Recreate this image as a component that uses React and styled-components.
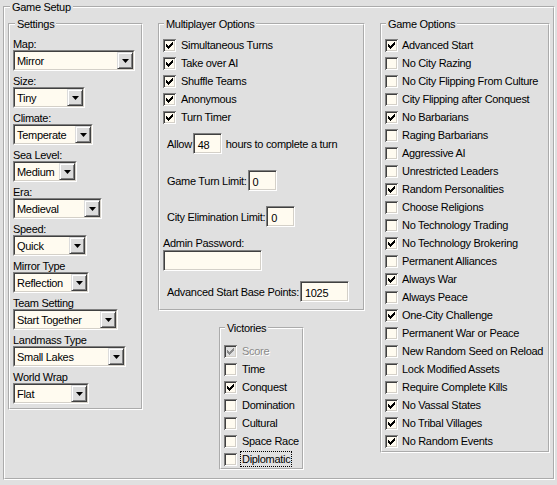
import styled, { createGlobalStyle } from 'styled-components';

const GlobalStyle = createGlobalStyle`
  html, body {
    margin: 0;
    padding: 0;
    background: #e0e0e0;
  }
  body {
    font-family: 'Liberation Sans', Arial, sans-serif;
    font-size: 11px;
    letter-spacing: -0.3px;
    color: #000;
  }
`;

const settings = [
  { label: 'Map:', value: 'Mirror', width: 122 },
  { label: 'Size:', value: 'Tiny', width: 72 },
  { label: 'Climate:', value: 'Temperate', width: 80 },
  { label: 'Sea Level:', value: 'Medium', width: 64 },
  { label: 'Era:', value: 'Medieval', width: 89 },
  { label: 'Speed:', value: 'Quick', width: 74 },
  { label: 'Mirror Type', value: 'Reflection', width: 76 },
  { label: 'Team Setting', value: 'Start Together', width: 105 },
  { label: 'Landmass Type', value: 'Small Lakes', width: 113 },
  { label: 'World Wrap', value: 'Flat', width: 76 },
];

const multiplayer = [
  { label: 'Simultaneous Turns', checked: true },
  { label: 'Take over AI', checked: true },
  { label: 'Shuffle Teams', checked: true },
  { label: 'Anonymous', checked: true },
  { label: 'Turn Timer', checked: true },
];

const victories = [
  { label: 'Score', checked: true, disabled: true },
  { label: 'Time' },
  { label: 'Conquest', checked: true },
  { label: 'Domination' },
  { label: 'Cultural' },
  { label: 'Space Race' },
  { label: 'Diplomatic', focused: true },
];

const gameOptions = [
  { label: 'Advanced Start', checked: true },
  { label: 'No City Razing' },
  { label: 'No City Flipping From Culture' },
  { label: 'City Flipping after Conquest' },
  { label: 'No Barbarians', checked: true },
  { label: 'Raging Barbarians' },
  { label: 'Aggressive AI' },
  { label: 'Unrestricted Leaders' },
  { label: 'Random Personalities', checked: true },
  { label: 'Choose Religions' },
  { label: 'No Technology Trading' },
  { label: 'No Technology Brokering', checked: true },
  { label: 'Permanent Alliances' },
  { label: 'Always War', checked: true },
  { label: 'Always Peace' },
  { label: 'One-City Challenge', checked: true },
  { label: 'Permanent War or Peace' },
  { label: 'New Random Seed on Reload' },
  { label: 'Lock Modified Assets' },
  { label: 'Require Complete Kills' },
  { label: 'No Vassal States', checked: true },
  { label: 'No Tribal Villages', checked: true },
  { label: 'No Random Events', checked: true },
];

function CheckBox({ checked, disabled }) {
  return (
    <Box $disabled={disabled}>
      {checked && (
        <svg width="13" height="13" viewBox="0 0 13 13">
          <path
            d="M3 5h1v3H3zM4 6h1v3H4zM5 7h1v3H5zM6 6h1v3H6zM7 5h1v3H7zM8 4h1v3H8zM9 3h1v3H9z"
            fill={disabled ? '#8a8a8a' : '#000'}
          />
        </svg>
      )}
    </Box>
  );
}

function CheckList({ items, gap }) {
  return items.map((item) => (
    <CheckRow key={item.label} $gap={gap}>
      <CheckBox checked={item.checked} disabled={item.disabled} />
      <CheckText $disabled={item.disabled} $focused={item.focused}>
        {item.label}
      </CheckText>
    </CheckRow>
  ));
}

function Select({ value, width }) {
  return (
    <SelectFrame $width={width}>
      <SelectInner>
        <SelectValue>{value}</SelectValue>
        <DropButton>
          <svg width="7" height="4" viewBox="0 0 7 4">
            <path d="M0 0h7L3.5 4z" fill="#000" />
          </svg>
        </DropButton>
      </SelectInner>
    </SelectFrame>
  );
}

export default function App() {
  return (
    <>
      <GlobalStyle />
      <Page>
        <Group $width={552}>
          <Caption $indent={5}>Game Setup</Caption>
          <Columns>
            <Group $width={135}>
              <Caption $indent={5}>Settings</Caption>
              <SettingsBody>
                {settings.map((s) => (
                  <div key={s.label}>
                    <FieldLabel>{s.label}</FieldLabel>
                    <Select value={s.value} width={s.width} />
                  </div>
                ))}
              </SettingsBody>
            </Group>

            <MiddleColumn>
              <Group $width={207}>
                <Caption>Multiplayer Options</Caption>
                <ListBody $bottom={7}>
                  <CheckList items={multiplayer} gap={5} />
                  <InlineField $top={7}>
                    Allow
                    <TextField $width={29}>48</TextField>
                    <Spacer />
                    hours to complete a turn
                  </InlineField>
                  <InlineField $top={16}>
                    Game Turn Limit:
                    <TextField $width={29}>0</TextField>
                  </InlineField>
                  <InlineField $top={15}>
                    City Elimination Limit:
                    <TextField $width={29}>0</TextField>
                  </InlineField>
                  <FieldLabel $top={9}>Admin Password:</FieldLabel>
                  <TextField $width={99} />
                  <InlineField $top={10}>
                    Advanced Start Base Points:
                    <TextField $width={49}>1025</TextField>
                  </InlineField>
                </ListBody>
              </Group>

              <Victories $width={85}>
                <Caption>Victories</Caption>
                <ListBody $top={7} $bottom={0}>
                  <CheckList items={victories} gap={5} />
                </ListBody>
              </Victories>
            </MiddleColumn>

            <Group $width={170}>
              <Caption>Game Options</Caption>
              <ListBody $bottom={1}>
                <CheckList items={gameOptions} gap={4} />
              </ListBody>
            </Group>
          </Columns>
        </Group>
      </Page>
    </>
  );
}

const Page = styled.div`
  padding: 0 2px 0 3px;
`;

const Group = styled.fieldset`
  box-sizing: border-box;
  width: ${(props) => props.$width}px;
  min-inline-size: 0;
  margin: 0;
  padding: 0;
  border: 2px groove #fff;
`;

const Caption = styled.legend`
  margin-left: ${(props) => props.$indent ?? 4}px;
  padding: 0 2px;
  line-height: 14px;
  white-space: nowrap;
`;

const Columns = styled.div`
  display: flex;
  justify-content: space-between;
  align-items: flex-start;
  padding: 3px 3px 8px 3px;
`;

const MiddleColumn = styled.div`
  display: flex;
  flex-direction: column;
  align-items: center;
`;

const Victories = styled(Group)`
  margin-top: 10px;
`;

const SettingsBody = styled.div`
  padding: 3px 3px 4px 3px;
`;

const ListBody = styled.div`
  padding: ${(props) => props.$top ?? 5}px 3px ${(props) => props.$bottom}px 3px;
`;

const FieldLabel = styled.div`
  margin-top: ${(props) => props.$top ?? 0}px;
  padding-top: ${(props) => (props.$top === undefined ? 5 : 0)}px;
  line-height: ${(props) => (props.$top === undefined ? 11 : 14)}px;
  white-space: nowrap;
`;

const SelectFrame = styled.div`
  box-sizing: border-box;
  width: ${(props) => props.$width}px;
  height: 21px;
  border: 1px solid;
  border-color: #808080 #fff #fff #808080;
`;

const SelectInner = styled.div`
  box-sizing: border-box;
  height: 100%;
  display: flex;
  align-items: center;
  background: #fffbf0;
  border: 1px solid;
  border-color: #404040 #d4d0c8 #d4d0c8 #404040;
`;

const SelectValue = styled.span`
  flex: 1;
  padding-left: 2px;
  line-height: 14px;
  white-space: nowrap;
  overflow: hidden;
`;

const DropButton = styled.span`
  box-sizing: border-box;
  width: 16px;
  height: 17px;
  display: flex;
  align-items: center;
  justify-content: center;
  background: #dcdcdc;
  border: 1px solid;
  border-color: #dcdcdc #404040 #404040 #dcdcdc;
  box-shadow: inset 1px 1px #fff, inset -1px -1px #808080;
`;

const CheckRow = styled.div`
  height: 18px;
  display: flex;
  align-items: center;
  gap: ${(props) => props.$gap}px;
`;

const Box = styled.span`
  flex: none;
  display: block;
  width: 13px;
  height: 13px;
  background: ${(props) => (props.$disabled ? '#e0e0e0' : '#fffbf0')};
  box-shadow: inset 1px 1px #808080, inset -1px -1px #fff, inset 2px 2px #404040,
    inset -2px -2px #d4d0c8;

  svg {
    display: block;
  }
`;

const CheckText = styled.span`
  line-height: 14px;
  white-space: nowrap;
  color: ${(props) => (props.$disabled ? '#8a8a8a' : '#000')};
  text-shadow: ${(props) => (props.$disabled ? '1px 1px #fff' : 'none')};
  outline: ${(props) => (props.$focused ? '1px dotted #000' : 'none')};
  padding: 0 1px;
  margin-left: -1px;
`;

const InlineField = styled.div`
  display: flex;
  align-items: center;
  margin-top: ${(props) => props.$top}px;
  padding-left: 4px;
  line-height: 14px;
  white-space: nowrap;
  gap: 1px;
`;

const Spacer = styled.span`
  width: 2px;
`;

const TextField = styled.div`
  box-sizing: border-box;
  width: ${(props) => props.$width}px;
  height: 21px;
  padding: 4px 3px 0 4px;
  line-height: 14px;
  background: #fffbf0;
  border: 1px solid;
  border-color: #808080 #fff #fff #808080;
  box-shadow: inset 1px 1px #404040, inset -1px -1px #d4d0c8;
`;
